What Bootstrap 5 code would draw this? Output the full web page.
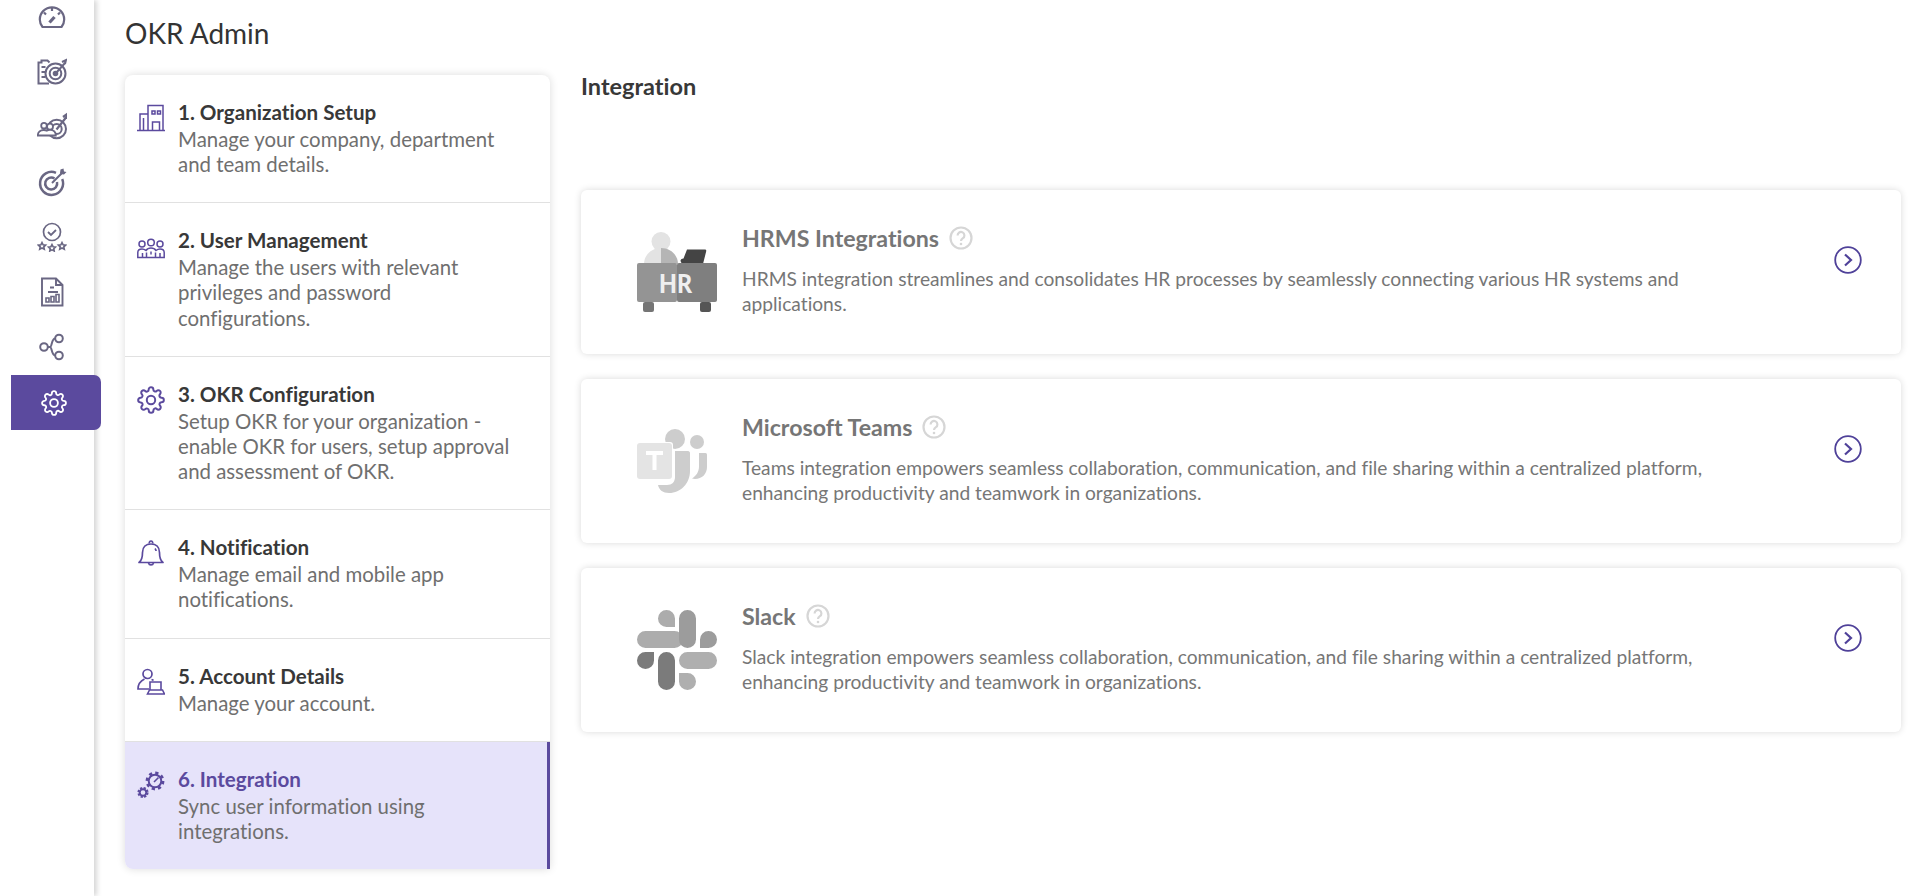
<!doctype html>
<html lang="en"><head><meta charset="utf-8"><title>OKR Admin</title>
<link href="https://cdn.jsdelivr.net/npm/bootstrap@5.3.0/dist/css/bootstrap.min.css" rel="stylesheet">
<style>
html,body{height:896px;overflow:hidden}
body{font-family:Lato,"Liberation Sans",sans-serif;background:#fff;color:#333;font-variant-ligatures:none}
.rail{width:94px;height:896px;background:#fff;box-shadow:3px 0 5px rgba(0,0,0,.16);flex:none;overflow:visible;position:relative;z-index:2}
.rail-list{margin-top:-11px;padding-left:11px}
.rail-item{width:90px;height:55px;color:#6a6783;border-radius:0 7px 7px 0}
.rail-item svg{width:30px;height:30px;margin-left:-9px}
.rail-item.is-on{background:#5b4a9e;color:#fff;margin-top:1px}
.rail-item.is-on svg{width:26px;height:26px;margin-left:-5px}
.body-area{padding:17px 19px 0 31px;min-width:0}
.page-title{font-size:28px;font-weight:400;line-height:32px;margin:0 0 26px;color:#333}
.steps{width:425px;flex:none;border-radius:8px 8px 0 8px;box-shadow:0 0 8px rgba(0,0,0,.14);background:#fff;overflow:hidden;align-self:flex-start}
.step{padding:25px 32px 25px 12px;border-bottom:1px solid #e1e1e1;gap:13px;font-size:20.4px;line-height:25.15px;color:#6f6f6f}
.step:last-child{border-bottom:0}
.step-ico{width:28px;height:28px;flex:none;margin-top:4px;color:#5b4a9e}
.step-h{font-weight:700;color:#383838;margin:0 0 2px;font-size:20.6px;line-height:25px}
.step.is-on{background:#e6e3fa;border-right:3px solid #5b4a9e;padding-right:29px}
.step.is-on .step-h{color:#5b4a9e}
.content{padding-left:31px;min-width:0}
.sec-title{font-size:23.5px;font-weight:700;margin:-1px 0 92px;line-height:24px;color:#383838}
.intg{height:164px;border-radius:6px;box-shadow:0 0 7px rgba(0,0,0,.15);background:#fff;margin-bottom:25px;padding:0 39px 0 56px}
.intg-ico{width:80px;height:80px;flex:none;margin-right:25px;margin-top:-1px}
.intg-main{width:975px;color:#767676;font-size:19.2px;line-height:25px;margin-bottom:5px}
.intg-title{font-size:23.2px;font-weight:700;line-height:28px;margin:0 0 14px;color:#767676;gap:10px}
.q{width:24px;height:24px;flex:none}
.go{width:28px;height:28px;margin-left:auto;flex:none;margin-bottom:24px}
</style></head>
<body>
<svg width="0" height="0" class="d-block position-absolute"><defs>
<symbol id="gear" viewBox="0 0 24 24"><circle cx="12" cy="12" r="3.6" fill="none" stroke="currentColor" stroke-width="1.7"/><path fill="none" stroke="currentColor" stroke-width="1.7" d="M19.4 15a1.65 1.65 0 0 0 .33 1.82l.06.06a2 2 0 0 1 0 2.83 2 2 0 0 1-2.83 0l-.06-.06a1.65 1.65 0 0 0-1.82-.33 1.65 1.65 0 0 0-1 1.51V21a2 2 0 0 1-2 2 2 2 0 0 1-2-2v-.09A1.65 1.65 0 0 0 9 19.4a1.65 1.65 0 0 0-1.82.33l-.06.06a2 2 0 0 1-2.83 0 2 2 0 0 1 0-2.83l.06-.06a1.65 1.65 0 0 0 .33-1.82 1.65 1.65 0 0 0-1.51-1H3a2 2 0 0 1-2-2 2 2 0 0 1 2-2h.09A1.65 1.65 0 0 0 4.6 9a1.65 1.65 0 0 0-.33-1.82l-.06-.06a2 2 0 0 1 0-2.83 2 2 0 0 1 2.83 0l.06.06a1.65 1.65 0 0 0 1.82.33H9a1.65 1.65 0 0 0 1-1.51V3a2 2 0 0 1 2-2 2 2 0 0 1 2 2v.09a1.65 1.65 0 0 0 1 1.51 1.65 1.65 0 0 0 1.82-.33l.06-.06a2 2 0 0 1 2.83 0 2 2 0 0 1 0 2.83l-.06.06a1.65 1.65 0 0 0-.33 1.82V9a1.65 1.65 0 0 0 1.51 1H21a2 2 0 0 1 2 2 2 2 0 0 1-2 2h-.09a1.65 1.65 0 0 0-1.51 1z"/></symbol>
<symbol id="help" viewBox="0 0 24 24"><circle cx="12" cy="12" r="10.500" fill="none" stroke="#d6d6d6" stroke-width="2.200"/><path d="M8.600 9.400a3.400 3.400 0 1 1 5.300 2.800c-1.200.8-1.900 1.400-1.900 2.900" fill="none" stroke="#d6d6d6" stroke-width="2.200"/><circle cx="12" cy="18" r="1.300" fill="#d6d6d6"/></symbol>
<symbol id="chev" viewBox="0 0 28 28"><circle cx="14" cy="14" r="12.800" fill="none" stroke="#4f4199" stroke-width="1.800"/><path d="M11 8.500l6 5.500-6 5.500" fill="none" stroke="#4f4199" stroke-width="2.200"/></symbol>
</defs></svg>
<div class="d-flex">
<nav class="rail"><div class="rail-list d-flex flex-column">
<div class="rail-item d-flex align-items-center justify-content-center"><svg viewBox="0 0 30 30" fill="none" stroke="currentColor" stroke-width="2.200"><path d="M5.500 25C3.600 22.600 2.800 20.300 2.800 17.500a12.200 12.200 0 0 1 24.400 0c0 2.800-.8 5.100-2.700 7.500z"/><path d="M15 6v3M7 10.500l2 2M23 10.500l-2 2"/><path d="M12.500 20.500l5-5.500" stroke-width="3.200"/></svg></div>
<div class="rail-item d-flex align-items-center justify-content-center"><svg viewBox="0 0 30 30" fill="none" stroke="currentColor" stroke-width="2"><path d="M12 26.500H1.500V5.500h3V3.500h6l2 2"/><path d="M4.500 10h4M4.500 15h4M4.500 20h4" stroke-width="2.200"/><circle cx="18.500" cy="16.500" r="10"/><circle cx="18.500" cy="16.500" r="5.800"/><circle cx="18.500" cy="16.500" r="1.800" fill="currentColor"/><path d="M19 16l9-10M25 5l4-2-1 4" stroke-width="2"/></svg></div>
<div class="rail-item d-flex align-items-center justify-content-center"><svg viewBox="0 0 30 30" fill="none" stroke="currentColor" stroke-width="2"><circle cx="19.700" cy="17" r="9.300"/><circle cx="19.700" cy="17" r="5"/><path d="M19.500 17.500L29 5.500M26 5l3.500-2.500L29.500 7" stroke-width="2.200"/><circle cx="7" cy="13.700" r="2.800" fill="#fff" stroke-width="1.800"/><circle cx="13" cy="14.700" r="3" fill="#fff" stroke-width="1.800"/><path d="M.8 23.500c0-3.500 2.700-5.500 6-5.500 1.200 0 2 .2 3 .7 1-.6 2-.8 3.200-.8 3.300 0 5.800 2 5.800 5.600z" fill="#fff" stroke-width="1.800"/></svg></div>
<div class="rail-item d-flex align-items-center justify-content-center"><svg viewBox="0 0 30 30" fill="none" stroke="currentColor" stroke-width="2.500"><path d="M19 5.800A11.500 11.500 0 1 0 25.200 12"/><path d="M17.500 11.500a6 6 0 1 0 2.500 3.500"/><path d="M15 16l11-11" stroke-width="2"/><path d="M23 6l.5-3.500 3 -1 .5 3 2.500.5-2.500 2.500-3.500-.5z" fill="currentColor" stroke="none"/></svg></div>
<div class="rail-item d-flex align-items-center justify-content-center"><svg viewBox="0 0 30 30" fill="none" stroke="currentColor" stroke-width="1.700"><circle cx="15" cy="10" r="8.500"/><path d="M11 10l3 3 5-5" stroke-width="1.800"/><path d="M5 20.500l1.100 2.300 2.500.3-1.800 1.700.5 2.400-2.300-1.200-2.300 1.200.5-2.400-1.800-1.700 2.500-.3zM25 20.500l1.100 2.300 2.500.3-1.800 1.700.5 2.400-2.300-1.200-2.300 1.200.5-2.400-1.800-1.700 2.500-.3zM15 22.500l1.100 2.200 2.400.3-1.700 1.700.4 2.300-2.200-1.100-2.200 1.100.4-2.300-1.700-1.700 2.400-.3z" stroke-width="1.600"/></svg></div>
<div class="rail-item d-flex align-items-center justify-content-center"><svg viewBox="0 0 30 30" fill="none" stroke="currentColor" stroke-width="1.900"><path d="M5 1.500h14l6.500 6.500v20.500H5z"/><path d="M19 1.500V8h6.500"/><path d="M13 10.500h4M11 15h10"/><path d="M9 21h3v4H9zM14 19.500h3V25h-3zM19 17.500h3V25h-3z" stroke-width="1.600"/></svg></div>
<div class="rail-item d-flex align-items-center justify-content-center"><svg viewBox="0 0 30 30" fill="none" stroke="currentColor" stroke-width="2"><circle cx="7" cy="15" r="3.800"/><circle cx="22" cy="6.500" r="3.800"/><circle cx="22" cy="23.500" r="3.800"/><path d="M10.800 15h2.200c2 0 1.500-8.500 5.200-8.500M13 15c2 0 1.500 8.500 5.200 8.500"/></svg></div>
<div class="rail-item is-on d-flex align-items-center justify-content-center"><svg><use href="#gear"/></svg></div>
</div></nav>
<main class="body-area flex-grow-1">
<h1 class="page-title">OKR Admin</h1>
<div class="d-flex">
<div class="steps">
<div class="step d-flex"><svg class="step-ico" viewBox="0 0 28 28" fill="none" stroke="currentColor" stroke-width="1.500"><path d="M0 26.500h28"/><path d="M11 26.500V1.500h15v25M11 10H3v16.500"/><path d="M15 7h3v3h-3zM20.500 7h3v3h-3z"/><path d="M15.500 26.500V18h7v8.500M6.500 14v12.500"/></svg><div><h2 class="step-h">1. Organization Setup</h2>Manage your company, department and team details.</div></div>
<div class="step d-flex"><svg class="step-ico" viewBox="0 0 28 28" fill="none" stroke="currentColor" stroke-width="1.500"><circle cx="5" cy="12" r="3"/><circle cx="14" cy="10.500" r="3.300"/><circle cx="23" cy="12" r="3"/><path d="M.8 25.500v-5c0-3 2-3.500 4.200-3.500s3 .7 4 1.500c1-1.500 3-2.500 5-2.500s4 1 5 2.500c1-.8 2-1.500 4-1.500s4.200.5 4.200 3.500v5zM5.500 21v4.500M14 19.500l0 3M23 21v4.500M9.500 20.500v5M18.500 20.500v5"/></svg><div><h2 class="step-h">2. User Management</h2>Manage the users with relevant privileges and password configurations.</div></div>
<div class="step d-flex"><svg class="step-ico"><use href="#gear"/></svg><div><h2 class="step-h">3. OKR Configuration</h2>Setup OKR for your organization - enable OKR for users, setup approval and assessment of OKR.</div></div>
<div class="step d-flex"><svg class="step-ico" viewBox="0 0 28 28" fill="none" stroke="currentColor" stroke-width="1.700"><path d="M2 23.500c3-2 3.500-4.500 3.500-10C5.500 8 9 5 14 5s8.500 3 8.500 8.500c0 5.500.5 8 3.500 10z" stroke-linejoin="round"/><path d="M12.500 4.500a1.700 1.700 0 1 1 3 0M11.500 24a2.600 2.600 0 0 0 5 0M18 9.500c.7.800 1 1.500 1.100 2.500"/></svg><div><h2 class="step-h">4. Notification</h2>Manage email and mobile app notifications.</div></div>
<div class="step d-flex"><svg class="step-ico" viewBox="0 0 28 28" fill="none" stroke="currentColor" stroke-width="1.700"><circle cx="10.500" cy="6" r="4.500"/><path d="M7.500 11c-4 2-6.500 5-6.500 10h11M14.500 11.500c1 .3 1.500.7 2 1"/><path d="M13 14h11v8H13zM10.500 26h17l-2-4H12.500z" stroke-width="1.600"/></svg><div><h2 class="step-h">5. Account Details</h2>Manage your account.</div></div>
<div class="step is-on d-flex"><svg class="step-ico" viewBox="0 0 28 28" fill="none" stroke="currentColor"><circle cx="18" cy="10" r="6.300" stroke-width="2"/><circle cx="18" cy="10" r="8" stroke-width="2.800" stroke-dasharray="3.200 3.080"/><path d="M17 11l4.500-4.500" stroke-width="1.600"/><circle cx="6" cy="21.500" r="3.300" stroke-width="2"/><circle cx="6" cy="21.500" r="4.500" stroke-width="2.200" stroke-dasharray="2.200 1.340"/></svg><div><h2 class="step-h">6. Integration</h2>Sync user information using integrations.</div></div>
</div>
<section class="content flex-grow-1">
<h2 class="sec-title">Integration</h2>
<div class="intg d-flex align-items-center"><svg class="intg-ico" viewBox="0 0 80 80"><circle cx="24" cy="9.500" r="9.500" fill="#e3e3e3"/><path d="M7 32c0-9 7.500-16 17-16v16z" fill="#e3e3e3"/><path d="M24 16c9.500 0 17 7 17 16H24z" fill="#b5b5b5"/><path d="M50 17.500h18c1 0 1.500 1 1.200 1.800L66 32H45l-1.500-3c0-1.200.8-2 1.800-2.200l1.200-.3z" fill="#444"/><rect x="0" y="31" width="40" height="39" rx="2" fill="#949494"/><rect x="40" y="31" width="40" height="39" rx="2" fill="#7f7f7f"/><rect x="6" y="70" width="11" height="10" rx="2" fill="#757575"/><rect x="63" y="70" width="11" height="10" rx="2" fill="#555"/><text x="22" y="61" font-family="Lato,sans-serif" font-weight="900" font-size="27" fill="#efefef" textLength="33" lengthAdjust="spacingAndGlyphs">HR</text></svg><div class="intg-main"><h3 class="intg-title d-flex align-items-center">HRMS Integrations<svg class="q"><use href="#help"/></svg></h3>HRMS integration streamlines and consolidates HR processes by seamlessly connecting various HR systems and applications.</div><svg class="go"><use href="#chev"/></svg></div>
<div class="intg d-flex align-items-center"><svg class="intg-ico" viewBox="0 0 80 80"><circle cx="38" cy="18" r="10" fill="#cdcdcd"/><circle cx="60" cy="21" r="7" fill="#cdcdcd"/><path d="M62 32h6.500c1 0 1.500 .8 1.500 2v12c0 7-5 12-12 12-1 0-2-.2-3-.5 4-2.500 7-6.500 7-12z" fill="#cdcdcd"/><path d="M38 30h13c1.200 0 2 1 2 2v18c0 12-9 22-21 22-6 0-10-3-11-8h9c5 0 8-3 8-8z" fill="#cdcdcd"/><rect x="-1" y="21" width="37" height="38" rx="3" fill="#fff"/><rect x="0" y="22" width="35" height="36" rx="3" fill="#e4e4e4"/><path d="M9 30h17v4h-6.500v15h-4V34H9z" fill="#fff"/></svg><div class="intg-main"><h3 class="intg-title d-flex align-items-center">Microsoft Teams<svg class="q"><use href="#help"/></svg></h3>Teams integration empowers seamless collaboration, communication, and file sharing within a centralized platform, enhancing productivity and teamwork in organizations.</div><svg class="go"><use href="#chev"/></svg></div>
<div class="intg d-flex align-items-center"><svg class="intg-ico" viewBox="0 0 80 80"><path d="M29.500 0a8.500 8.500 0 0 0 0 17h8.500V8.500A8.500 8.500 0 0 0 29.500 0zM8.500 21h29a8.500 8.500 0 0 1 0 17h-29a8.500 8.500 0 0 1 0-17z" fill="#acacac"/><path d="M71.500 21a8.500 8.500 0 0 0-8.500 8.500V38h8.500a8.500 8.500 0 0 0 0-17zM42 8.500a8.500 8.500 0 0 1 17 0v21a8.500 8.500 0 0 1-17 0z" fill="#9c9c9c"/><path d="M8.500 42a8.500 8.500 0 0 0 0 17 8.500 8.500 0 0 0 8.500-8.500V42zM21 50.500a8.500 8.500 0 0 1 17 0v21a8.500 8.500 0 0 1-17 0z" fill="#7b7b7b"/><path d="M50.500 42h21a8.500 8.500 0 0 1 0 17h-21a8.500 8.500 0 0 1 0-17zM42 63h8.500a8.500 8.500 0 1 1-8.500 8.500z" fill="#afafaf"/></svg><div class="intg-main"><h3 class="intg-title d-flex align-items-center">Slack<svg class="q"><use href="#help"/></svg></h3>Slack integration empowers seamless collaboration, communication, and file sharing within a centralized platform, enhancing productivity and teamwork in organizations.</div><svg class="go"><use href="#chev"/></svg></div>
</section>
</div>
</main>
</div>
</body></html>
